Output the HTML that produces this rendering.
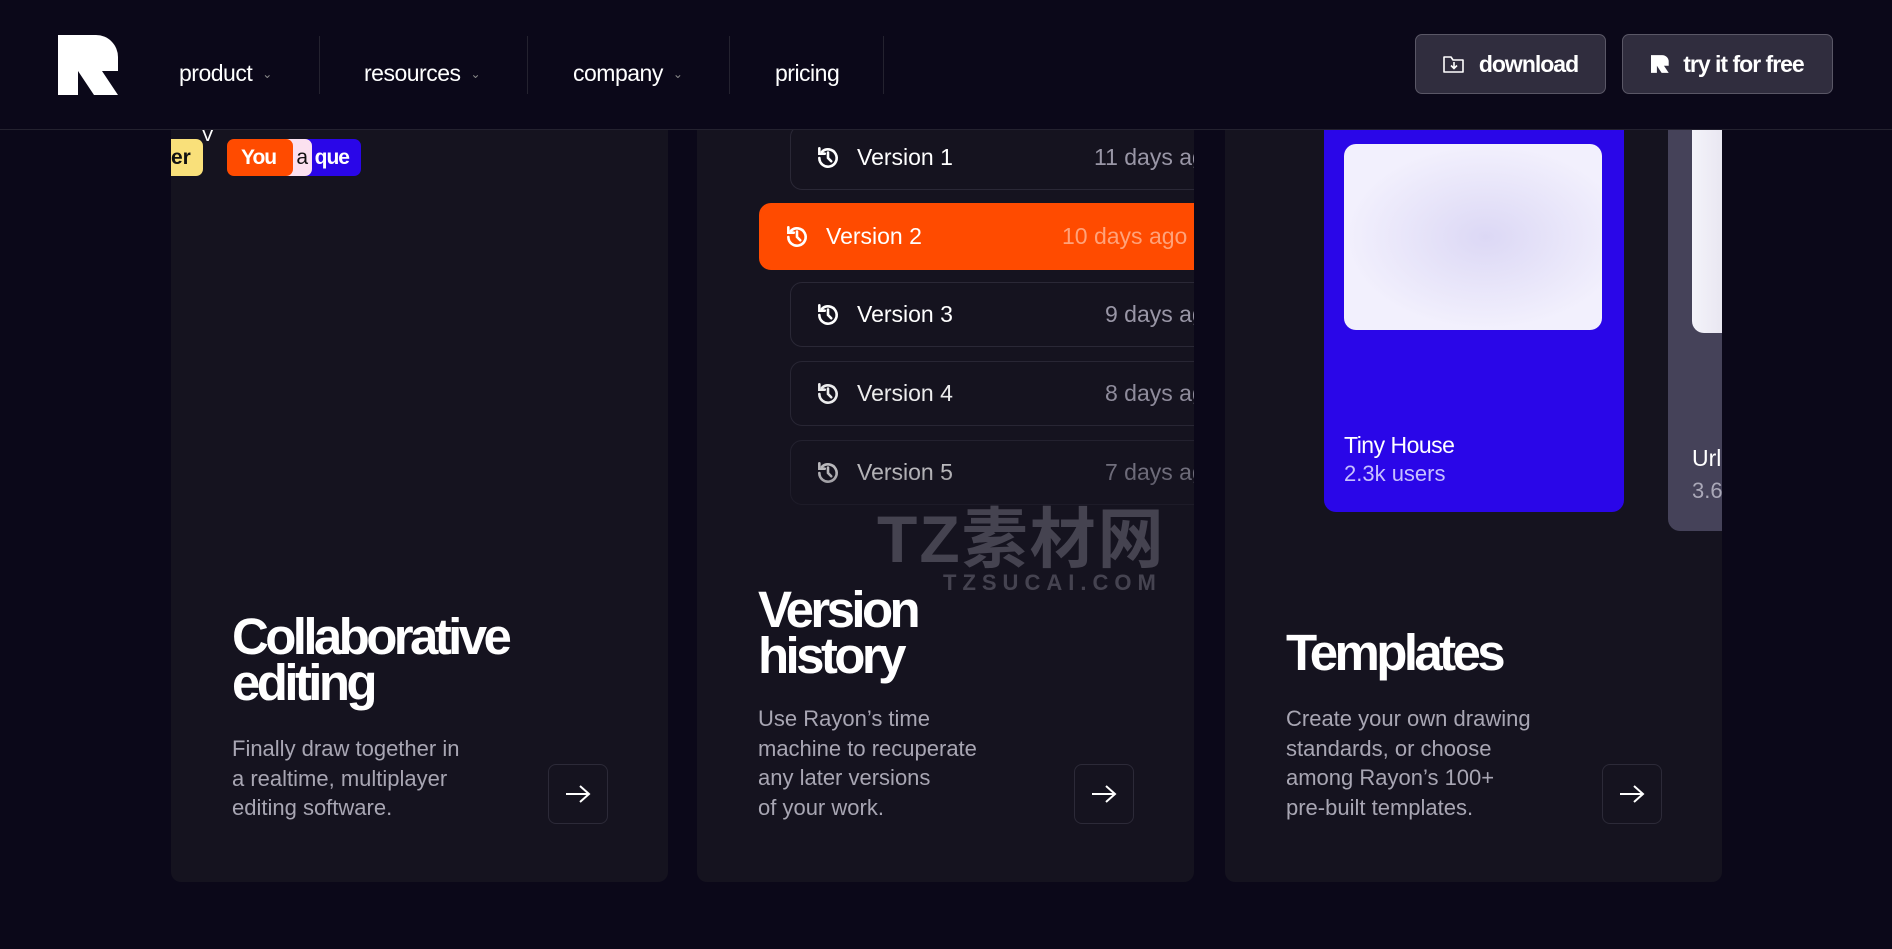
<!DOCTYPE html>
<html><head><meta charset="utf-8"><style>
*{margin:0;padding:0;box-sizing:border-box}
body{width:1892px;height:949px;background:#0b0819;font-family:"Liberation Sans",sans-serif;color:#fff;overflow:hidden;position:relative}
.card{position:absolute;top:0;width:497px;height:882px;background:#15131f;border-radius:0 0 10px 10px;overflow:hidden}
.h{position:absolute;font-weight:700;font-size:51px;line-height:46px;letter-spacing:-3.6px;color:#fff}
.d{position:absolute;font-size:22px;line-height:29.5px;color:#a8a6b3}
.arr{position:absolute;width:60px;height:60px;border:1px solid #2c2a38;border-radius:8px;display:flex;align-items:center;justify-content:center}
.row{position:absolute;height:65px;border:1px solid #2a2836;border-radius:12px;width:600px;display:flex;align-items:center;font-size:23px}
.row svg{margin-left:24px;margin-right:16px}
.row .dt{position:absolute;color:#9996a6}
header{position:absolute;left:0;top:0;width:1892px;height:130px;background:#0b0819;border-bottom:1px solid #24222f;z-index:5}
.nav{position:absolute;top:60px;font-size:23px;letter-spacing:-0.5px}
.nav i{font-style:normal;font-size:12px;color:#888;margin-left:10px;position:relative;top:-3px}
.div{position:absolute;top:36px;width:1px;height:58px;background:#24222f}
.btn{position:absolute;top:34px;height:60px;border:1px solid #5a5766;background:#302d3e;border-radius:7px;display:flex;align-items:center;justify-content:center;font-weight:700;font-size:23px;letter-spacing:-1px}
</style></head><body>
<header>
<svg style="position:absolute;left:58px;top:35px" width="61" height="60" viewBox="0 0 61 60"><path d="M0 0H38A22 22 0 0 1 60 22V36H44L60 60H36L20 36V60H0Z" fill="#fff"/></svg>
<div class="nav" style="left:179px">product<i>⌄</i></div>
<div class="div" style="left:319px"></div>
<div class="nav" style="left:364px">resources<i>⌄</i></div>
<div class="div" style="left:527px"></div>
<div class="nav" style="left:573px">company<i>⌄</i></div>
<div class="div" style="left:729px"></div>
<div class="nav" style="left:775px">pricing</div>
<div class="div" style="left:883px"></div>
<div class="btn" style="left:1415px;width:191px"><svg width="22" height="20" viewBox="0 0 22 20" style="margin-right:14px"><path d="M1 3V18H20V6H10L8 3Z" fill="none" stroke="#fff" stroke-width="1.6" stroke-linejoin="round"/><path d="M11 8V14M8 11.5L11 14.5L14 11.5" fill="none" stroke="#fff" stroke-width="1.6"/></svg>download</div>
<div class="btn" style="left:1622px;width:211px"><svg width="18" height="18" viewBox="0 0 61 60" style="margin-right:14px"><path d="M0 0H38A22 22 0 0 1 60 22V36H44L60 60H36L20 36V60H0Z" fill="#fff"/></svg>try it for free</div>
</header>

<div class="card" style="left:171px">
  <div style="position:absolute;left:0;top:139px;width:32px;height:37px;background:#f9e07a;border-radius:0 7px 7px 0;color:#111;font-weight:700;font-size:21px;line-height:37px;padding-left:0">er</div>
  <div style="position:absolute;left:30px;top:124px;color:#fff;font-size:20px">V</div>
  <div style="position:absolute;left:100px;top:139px;width:90px;height:37px;background:#2a06e8;border-radius:7px;color:#fff;font-weight:700;font-size:21px;line-height:37px;text-align:right;padding-right:12px;letter-spacing:-1px">que</div>
  <div style="position:absolute;left:91px;top:139px;width:50px;height:37px;background:#fbe1ef;border-radius:7px;color:#111;font-size:21px;line-height:37px;text-align:right;padding-right:4px">a</div>
  <div style="position:absolute;left:56px;top:139px;width:66px;height:37px;background:#ff4b00;border-radius:7px;color:#fff;font-weight:700;font-size:21px;line-height:37px;padding-left:14px;letter-spacing:-1px">You</div>
  <div class="h" style="left:61px;top:614px">Collaborative<br>editing</div>
  <div class="d" style="left:61px;top:734px">Finally draw together in<br>a realtime, multiplayer<br>editing software.</div>
  <div class="arr" style="left:377px;top:764px"><svg width="26" height="20" viewBox="0 0 26 20"><path d="M1 10H24M15 2L24 10L15 18" fill="none" stroke="#fff" stroke-width="2"/></svg></div>
</div>

<div class="card" style="left:697px">
  <div class="row" style="left:93px;top:125px"><svg width="26" height="26" viewBox="0 0 24 24"><path d="M4 12A8 8 0 1 0 6.5 6.2M4 3V8H9M12 7V12L15 15" fill="none" stroke="#fff" stroke-width="2.4" stroke-linecap="round"/></svg>Version 1<span class="dt" style="left:303px">11 days ago</span></div>
  <div class="row" style="left:62px;top:203px;background:#ff4b00;border-color:#ff4b00;height:67px"><svg width="26" height="26" viewBox="0 0 24 24"><path d="M4 12A8 8 0 1 0 6.5 6.2M4 3V8H9M12 7V12L15 15" fill="none" stroke="#fff" stroke-width="2.4" stroke-linecap="round"/></svg>Version 2<span class="dt" style="left:302px;color:#ffa27a">10 days ago</span></div>
  <div class="row" style="left:93px;top:282px"><svg width="26" height="26" viewBox="0 0 24 24"><path d="M4 12A8 8 0 1 0 6.5 6.2M4 3V8H9M12 7V12L15 15" fill="none" stroke="#fff" stroke-width="2.4" stroke-linecap="round"/></svg>Version 3<span class="dt" style="left:314px">9 days ago</span></div>
  <div class="row" style="left:93px;top:361px;opacity:.92"><svg width="26" height="26" viewBox="0 0 24 24"><path d="M4 12A8 8 0 1 0 6.5 6.2M4 3V8H9M12 7V12L15 15" fill="none" stroke="#fff" stroke-width="2.4" stroke-linecap="round"/></svg>Version 4<span class="dt" style="left:314px">8 days ago</span></div>
  <div class="row" style="left:93px;top:440px;opacity:.7"><svg width="26" height="26" viewBox="0 0 24 24"><path d="M4 12A8 8 0 1 0 6.5 6.2M4 3V8H9M12 7V12L15 15" fill="none" stroke="#fff" stroke-width="2.4" stroke-linecap="round"/></svg>Version 5<span class="dt" style="left:314px">7 days ago</span></div>
  <div style="position:absolute;left:0;top:470px;width:497px;height:80px;background:linear-gradient(rgba(21,19,31,0),#15131f)"></div>
  <div style="position:absolute;left:180px;top:486px;font-size:66px;font-weight:700;color:rgba(110,108,120,.55);font-family:'Liberation Sans','Noto Sans CJK SC',sans-serif;letter-spacing:2px">TZ素材网</div>
  <div style="position:absolute;left:246px;top:570px;font-size:22px;font-weight:700;color:rgba(110,108,120,.55);letter-spacing:6px">TZSUCAI.COM</div>
  <div class="h" style="left:61px;top:587px">Version<br>history</div>
  <div class="d" style="left:61px;top:704px">Use Rayon’s time<br>machine to recuperate<br>any later versions<br>of your work.</div>
  <div class="arr" style="left:377px;top:764px"><svg width="26" height="20" viewBox="0 0 26 20"><path d="M1 10H24M15 2L24 10L15 18" fill="none" stroke="#fff" stroke-width="2"/></svg></div>
</div>

<div class="card" style="left:1225px">
  <div style="position:absolute;left:99px;top:0;width:300px;height:512px;background:#2a06e8;border-radius:0 0 12px 12px">
    <div style="position:absolute;left:20px;top:144px;width:258px;height:186px;border-radius:12px;background:radial-gradient(ellipse at 55% 50%,#dcd8f5,#f2f0fd 70%)"></div>
    <div style="position:absolute;left:20px;top:432px;font-size:23px;letter-spacing:-0.5px">Tiny House</div>
    <div style="position:absolute;left:20px;top:461px;font-size:22px;color:#c7c0ff">2.3k users</div>
  </div>
  <div style="position:absolute;left:443px;top:0;width:120px;height:531px;background:#454259;border-radius:0 0 12px 12px">
    <div style="position:absolute;left:24px;top:0;width:60px;height:333px;border-radius:0 0 12px 12px;background:linear-gradient(90deg,#f4f3fa,#dedbe9)"></div>
    <div style="position:absolute;left:24px;top:445px;font-size:23px">Url</div>
    <div style="position:absolute;left:24px;top:478px;font-size:22px;color:#aaa8b8">3.6k</div>
  </div>
  <div class="h" style="left:61px;top:630px">Templates</div>
  <div class="d" style="left:61px;top:704px">Create your own drawing<br>standards, or choose<br>among Rayon’s 100+<br>pre-built templates.</div>
  <div class="arr" style="left:377px;top:764px"><svg width="26" height="20" viewBox="0 0 26 20"><path d="M1 10H24M15 2L24 10L15 18" fill="none" stroke="#fff" stroke-width="2"/></svg></div>
</div>
</body></html>
